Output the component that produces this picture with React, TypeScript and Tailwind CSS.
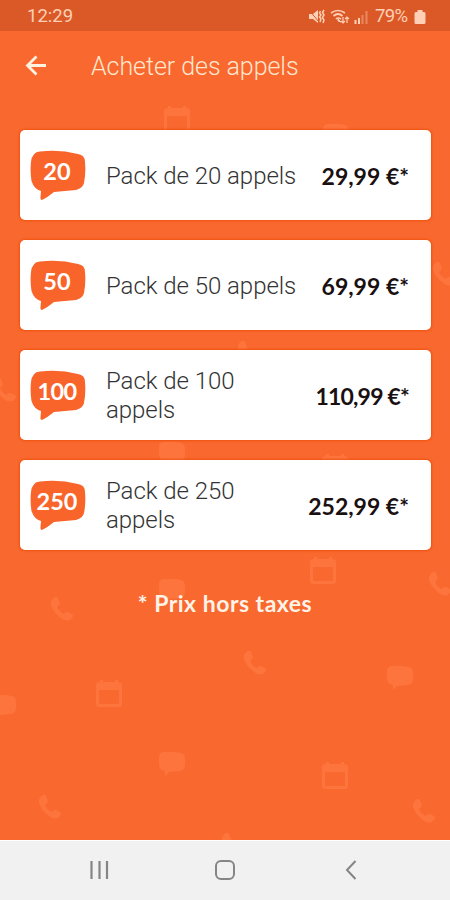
import clsx from "clsx";

const packs = [
  { count: 20, price: "29,99 €" },
  { count: 50, price: "69,99 €" },
  { count: 100, price: "110,99 €" },
  { count: 250, price: "252,99 €" },
];

const phones = [
  [432, 261],
  [237, 340],
  [-7, 377],
  [50, 596],
  [428, 571],
  [243, 650],
  [38, 794],
  [412, 798],
  [221, 832],
];

const bubbles = [
  [322, 123],
  [158, 441],
  [158, 578],
  [-11, 694],
  [386, 665],
  [158, 751],
];

const calendars = [
  [164, 106],
  [322, 454],
  [310, 557],
  [96, 680],
  [322, 762],
];

const Pattern = () => (
  <svg className="absolute inset-0 size-full" viewBox="0 0 450 840" fill="#fe743d" aria-hidden="true">
    {phones.map(([x, y]) => (
      <path
        key={`p${x}-${y}`}
        transform={`translate(${x} ${y})`}
        d="M5 1Q7 0 8 2L10 7Q10 9 7 11Q9 16 14 18Q16 15 18 16L22 18Q24 19 22 22Q18 27 11 22Q3 16 1 9Q0 4 5 1Z"
      />
    ))}
    {bubbles.map(([x, y]) => (
      <path
        key={`b${x}-${y}`}
        transform={`translate(${x} ${y})`}
        d="M5 1Q14 0 23 2Q27 3 27 8V14Q27 19 22 20L11 21L7 25V20Q1 19 1 13V6Q1 2 5 1Z"
      />
    ))}
    {calendars.map(([x, y]) => (
      <path
        key={`c${x}-${y}`}
        transform={`translate(${x} ${y})`}
        fillRule="evenodd"
        d="M4 0H7V2H19V0H22V2Q26 2 26 5V24Q26 27 23 27H3Q0 27 0 24V5Q0 2 4 2ZM3 10V24H23V10Z"
      />
    ))}
  </svg>
);

const StatusBar = () => (
  <div className="relative flex h-[31px] items-center justify-between bg-[#db5927] pt-0.5 pr-[24px] pl-[27px] font-[Roboto] text-[18.5px] text-[#ffd0b5]">
    <span>12:29</span>
    <div className="flex items-center">
      <svg className="mr-[5px]" width="62" height="18" viewBox="0 0 62 18" fill="none" stroke="#ffd0b5">
        <path d="M1 6H5L10 2V15L5 11H1Z" fill="#ffd0b5" stroke="none" />
        <path d="M1 2L11 14" stroke="#db5927" strokeWidth="1" />
        <path d="M12.5 3L11.5 5L13 7L11.5 9L13 11L12 14M16 2L14.5 4.5L16 7L14.5 9.5L16 12L15 15" strokeWidth="1.5" />
        <path d="M23 5Q30 0 37 5M25.500 8Q30 4 34.500 8M28 11Q30 9 33 11" strokeWidth="1.7" />
        <path d="M30 11L33 14L30 13Z" fill="#ffd0b5" />
        <path d="M35 9V15M33 13L35 15L37 13M39 15V9M37 11L39 9L41 11" strokeWidth="1.2" />
        <path d="M47.500 12V16M51 10V16" strokeWidth="2" />
        <path d="M54.5 7V16M58.500 3V16" strokeWidth="2" opacity=".4" />
      </svg>
      <span className="w-[36px] tracking-[-0.6px]">79%</span>
      <svg className="ml-[3px]" width="12" height="16" viewBox="0 0 12 16" fill="#ffd0b5">
        <path d="M3.500 1H8.500V3H10Q11.5 3 11.5 4.5V13.5Q11.5 15 10 15H2Q.5 15 .5 13.5V4.5Q.5 3 2 3H3.500Z" />
      </svg>
    </div>
  </div>
);

const PackCard = ({ count, price }: { count: number; price: string }) => (
  <button className="flex h-[90px] w-full items-center rounded-[5px] bg-white pt-[2px] pr-[22px] pl-[10px] text-left shadow-[0_0_2px_1px_#ee5310]">
    <span className="relative -mt-0.5 h-[50px] w-[56px] shrink-0">
      <svg className="absolute inset-0" width="56" height="50" viewBox="0 0 56 50" fill="#f9642a">
        <path d="M10 1.5Q29 -1 48 4Q55 5 55 12Q56 23 54 33Q53 38 46 40Q35 41 24 42Q18 47 12 50Q10 50 10.5 47L11 41Q4 39 1.500 31Q0 22 1 12Q2 2 10 1.500Z" />
      </svg>
      <span
        className={clsx(
          "relative block w-[54px] pt-[6px] text-center font-[Lato] text-[23.5px] leading-[30px] font-bold text-white",
          count === 100 && "tracking-[-0.6px]"
        )}
      >
        {count}
      </span>
    </span>
    <span className="ml-5 flex-1 font-[Roboto] text-[24px] leading-[29px] font-light tracking-[-0.05px] text-[#333]">
      Pack de {count}
      {count < 100 ? " " : <br />}
      appels
    </span>
    <span
      className={clsx(
        "ml-2 shrink-0 font-[Lato] text-[23px] font-bold whitespace-nowrap text-[#1a1012]",
        price.startsWith("11") && "tracking-[-0.8px]"
      )}
    >
      {price}*
    </span>
  </button>
);

export default function App() {
  return (
    <div className="flex h-[900px] w-[450px] flex-col overflow-hidden bg-[#f1f1f1]">
      <main className="relative h-[840px] overflow-hidden bg-[#f9682e]">
        <Pattern />
        <StatusBar />
        <header className="relative flex h-[99px] items-start pt-[22px] pl-[25px]">
          <svg className="mt-[2px]" width="22" height="22" viewBox="0 0 22 22" fill="none" stroke="#fff3df" strokeWidth="2.8">
            <path d="M21 10.500H3M11.500 1.500L2.500 10.500L11.500 19.500" />
          </svg>
          <h1 className="ml-[44px] font-[Roboto] text-[25px] leading-7 font-light tracking-[-0.06px] text-[#ffe7cf]">Acheter des appels</h1>
        </header>
        <div className="relative flex flex-col gap-5 pr-[19px] pl-5">
          {packs.map((pack) => (
            <PackCard key={pack.count} {...pack} />
          ))}
        </div>
        <p className="relative mt-[38px] text-center font-[Lato] text-[23px] leading-[30px] font-bold tracking-[0.5px] text-[#fff3e8]">
          * Prix hors taxes
        </p>
      </main>
      <nav className="flex h-[60px] items-center border-t border-white bg-[#f1f1f1]">
        <svg width="450" height="58" viewBox="0 0 450 58" fill="none" stroke="#858585" strokeWidth="2">
          <path d="M91.500 19V37M99.500 19V37M107 19V37" strokeWidth="2.2" />
          <rect x="216" y="19" width="18" height="18" rx="5" />
          <path d="M355.500 19L347 28L355.500 37" />
        </svg>
      </nav>
    </div>
  );
}
